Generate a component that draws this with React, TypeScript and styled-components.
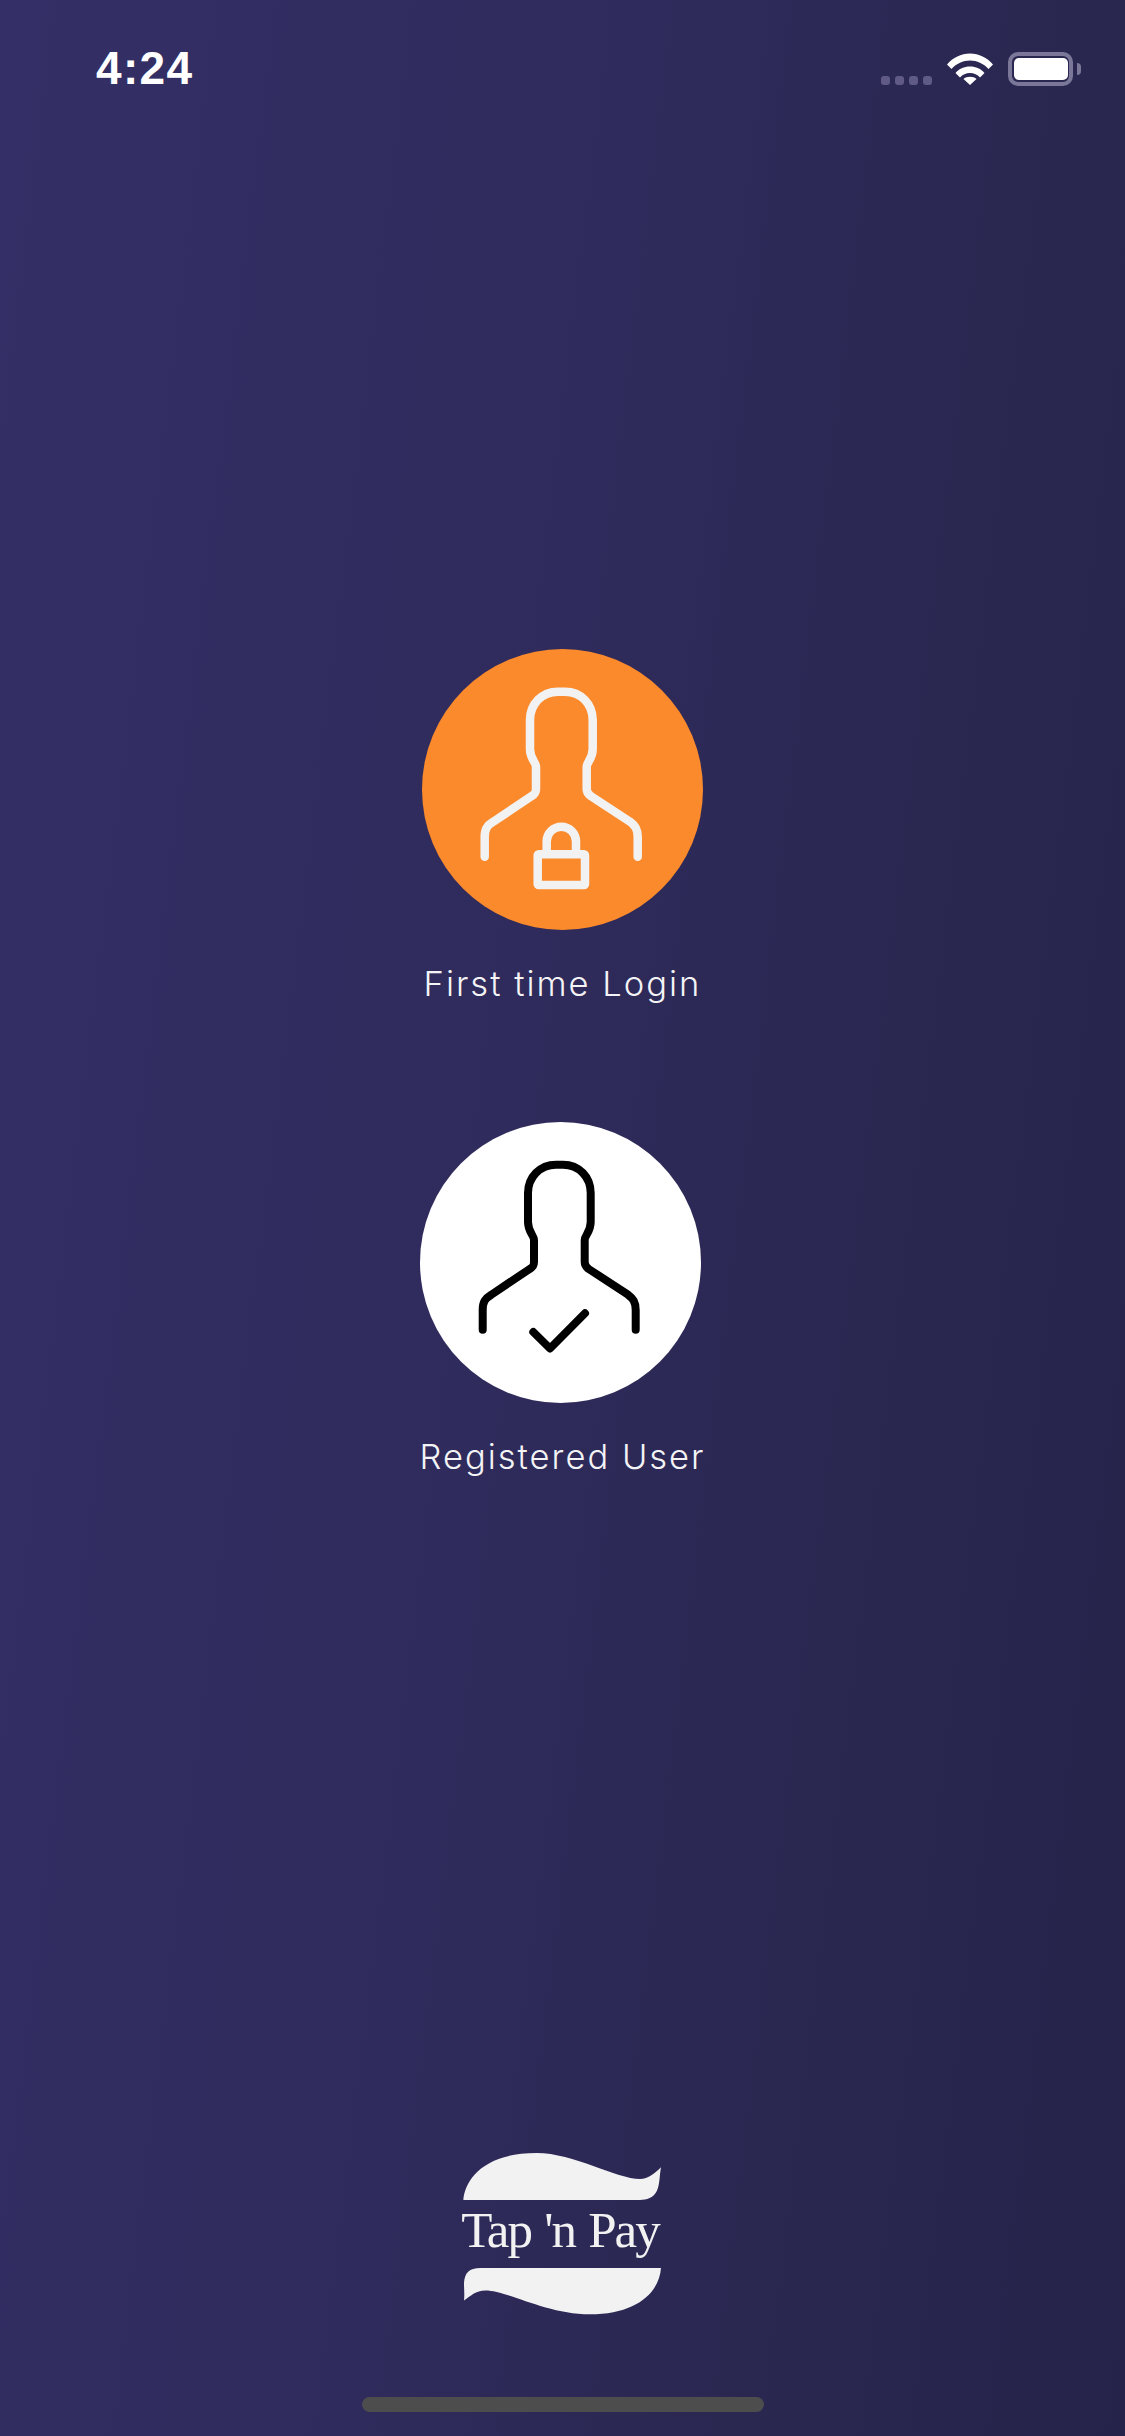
import React from "react";
import styled, { createGlobalStyle } from "styled-components";

const Global = createGlobalStyle`
  html, body { margin: 0; padding: 0; background: #2d2a58; }
  #root { width: 1125px; }
`;

const Page = styled.div`
  width: 1125px;
  height: 2436px;
  display: flex;
  flex-direction: column;
  overflow: hidden;
  background: linear-gradient(97deg, #342f66 0%, #2f2b5c 45%, #2a2751 72%, #25234a 100%);
  font-family: "Inter", "Open Sans", sans-serif;
`;

const StatusBar = styled.div`
  height: 137px;
  flex: none;
  display: flex;
  align-items: flex-start;
  justify-content: space-between;
  box-sizing: border-box;
  padding: 41px 52px 0 96px;
`;

const Time = styled.div`
  font: 700 46px/54px "Liberation Sans", Arial, sans-serif;
  letter-spacing: 1.3px;
  color: #fff;
`;

const StatusIcons = styled.div`
  display: flex;
  align-items: flex-end;
  margin-top: 11px;
`;

const SignalDots = styled.div`
  display: flex;
  gap: 5px;
  margin-right: 15px;
  margin-bottom: 1px;
`;

const Dot = styled.span`
  width: 9px;
  height: 9px;
  border-radius: 3px;
  background: #5f5b86;
`;

const Wifi = styled.svg`
  width: 46px;
  height: 32px;
  margin-right: 15px;
  margin-bottom: 1px;
`;

const Battery = styled.div`
  position: relative;
  width: 65px;
  height: 34px;
  box-sizing: border-box;
  border: 4px solid #7a7798;
  border-radius: 10px;
  padding: 2px 1px 2px 2px;
  &::after {
    content: "";
    position: absolute;
    right: -12px;
    top: 7px;
    width: 4px;
    height: 12px;
    border-radius: 0 6px 6px 0;
    background: #7a7798;
  }
`;

const BatteryFill = styled.div`
  width: 100%;
  height: 100%;
  border-radius: 5px;
  background: #fff;
`;

const Main = styled.main`
  display: flex;
  flex-direction: column;
  align-items: center;
  flex: none;
  margin-top: 512px;
`;

const Choice = styled.div`
  display: flex;
  flex-direction: column;
  align-items: center;
  width: 320px;
  & + & {
    margin-top: 111px;
  }
`;

const Circle = styled.div<{ $bg: string; $nudge: number }>`
  width: 281px;
  height: 281px;
  border-radius: 50%;
  background: ${(p) => p.$bg};
  transform: translateX(${(p) => p.$nudge}px);
`;

const Glyph = styled.svg<{ $color: string; $sw: number }>`
  display: block;
  width: 281px;
  height: 281px;
  fill: none;
  stroke: ${(p) => p.$color};
  stroke-width: ${(p) => p.$sw};
  stroke-linecap: round;
  stroke-linejoin: round;
`;

const Label = styled.div`
  margin-top: 27px;
  font-size: 34.5px;
  line-height: 54px;
  font-weight: 300;
  letter-spacing: 2px;
  color: #f4f4f6;
  white-space: nowrap;
`;

const Logo = styled.div`
  margin-top: auto;
  margin-left: -5px;
  align-self: center;
  width: 240px;
  display: flex;
  flex-direction: column;
  align-items: center;
`;

const LogoWave = styled.svg`
  display: block;
  width: 240px;
  fill: #f2f2f2;
`;

const LogoText = styled.div`
  font: 400 51px/61px "Liberation Serif", "Times New Roman", serif;
  letter-spacing: -2px;
  word-spacing: 2.5px;
  margin-bottom: 7px;
  color: #f2f2f2;
  white-space: nowrap;
  text-align: center;
`;

const HomeIndicator = styled.div`
  flex: none;
  align-self: center;
  width: 402px;
  height: 15px;
  margin: 81px 0 24px 1px;
  border-radius: 7.5px;
  background: #4d4d4d;
`;

const personPath =
  "M62.7 207.7 V188 C62.7 180 65 176.5 71.3 172.7 L109.7 147 C113 145 114 143.5 114 140 V118 C114 113 108 110 108 100 V71 C108 55 120 42.7 136 42.7 H143 C159 42.7 170.7 55 170.7 71 V100 C170.7 110 164.7 113 164.7 118 V140 C164.7 143.5 166 145 168.7 147 L208 172.7 C213 176.5 215.7 180 215.7 188 V207.7";

export default function App() {
  return (
    <Page>
      <Global />
      <StatusBar>
        <Time>4:24</Time>
        <StatusIcons>
          <SignalDots>
            <Dot />
            <Dot />
            <Dot />
            <Dot />
          </SignalDots>
          <Wifi viewBox="0 0 46 32" fill="#fff">
            <path d="M0 11.5 C6 4.5 14 0.5 23 0.5 C32 0.5 40 4.5 46 11.5 L41.5 16 C36.5 10.5 30 7.5 23 7.5 C16 7.5 9.5 10.5 4.5 16 Z" />
            <path d="M8.5 20 C12 15.8 17 13.5 23 13.5 C29 13.5 34 15.8 37.5 20 L33 24.5 C30.5 21.5 27 20 23 20 C19 20 15.5 21.5 13 24.5 Z" />
            <path d="M16.5 26 C18 24.6 20.3 23.8 23 23.8 C25.7 23.8 28 24.6 29.5 26 L23 32 Z" />
          </Wifi>
          <Battery>
            <BatteryFill />
          </Battery>
        </StatusIcons>
      </StatusBar>
      <Main>
        <Choice>
          <Circle $bg="#fb8a2c" $nudge={0}>
            <Glyph viewBox="0 0 281 281" $color="#f2f2f2" $sw={8.5}>
              <path d={personPath} />
              <rect x="115.7" y="205.3" width="47.3" height="30.7" rx="1" />
              <path d="M124.7 203 V192.3 A14.65 14.65 0 0 1 154 192.3 V203" />
            </Glyph>
          </Circle>
          <Label>First time Login</Label>
        </Choice>
        <Choice>
          <Circle $bg="#ffffff" $nudge={-2}>
            <Glyph viewBox="0 0 281 281" $color="#000000" $sw={8}>
              <path d={personPath} />
              <path d="M113.3 210 L130 226.5 L165 191.3" />
            </Glyph>
          </Circle>
          <Label>Registered User</Label>
        </Choice>
      </Main>
      <Logo>
        <LogoWave viewBox="0 40 720 141" height="47">
          <path d="M70 181 C75 120 130 40 290 40 C400 40 530 118 600 118 C625 118 645 100 663 83 C658 110 660 135 650 155 C640 175 620 181 600 181 Z" />
        </LogoWave>
        <LogoText>Tap 'n Pay</LogoText>
        <LogoWave viewBox="0 385 720 145" height="48">
          <path d="M665 385 H120 C85 385 72 400 70 430 C70 450 72 465 70 483 C90 470 105 453 135 453 C200 453 320 525 450 525 C590 525 660 460 665 385 Z" />
        </LogoWave>
      </Logo>
      <HomeIndicator />
    </Page>
  );
}
